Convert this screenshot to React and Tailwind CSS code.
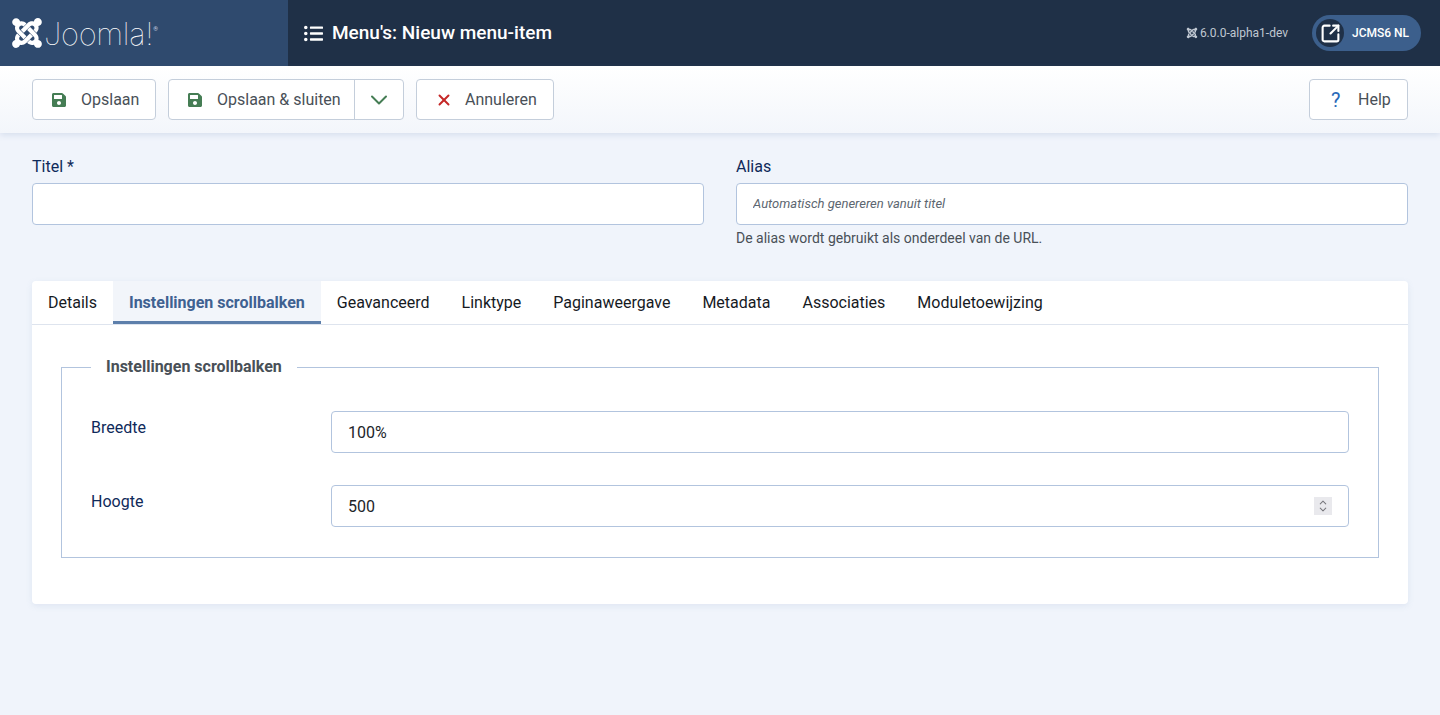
import { FaSave, FaListUl, FaJoomla } from "react-icons/fa";
import { ChevronDown, ChevronUp, SquareArrowOutUpRight, X } from "lucide-react";

const tabs = ["Details", "Instellingen scrollbalken", "Geavanceerd", "Linktype", "Paginaweergave", "Metadata", "Associaties", "Moduletoewijzing"];

function ToolButton({ icon, label, className = "" }) {
  return (
    <button className={`h-[41px] flex items-center bg-white border border-[#c4cedb] rounded-[4px] text-[16px] text-[#495057] ${className}`}>
      {icon}
      <span>{label}</span>
    </button>
  );
}

const inputClass = "w-full h-[42px] bg-white border border-[#b2c4de] rounded-[4px] px-4 text-[#212529] outline-none";

export default function App() {
  return (
    <div className="min-h-[715px] bg-[#f0f4fb] font-['Roboto',sans-serif]">
      {/* Header */}
      <div className="h-[66px] flex bg-[#1f3047] text-white">
        <div className="w-[288px] flex items-center pl-[10px] bg-[#2f4a6e]">
          <FaJoomla className="text-[34px] shrink-0" />
          <span className="font-['Inter',sans-serif] font-thin text-[31px] leading-none tracking-[-0.3px]">Joomla!</span>
          <span className="text-[6px] self-start mt-[24px] text-[#c8d2e0]">®</span>
        </div>
        <div className="flex-1 flex items-center pl-4 pr-[19px]">
          <FaListUl className="text-[19px] mr-[9px]" />
          <h1 className="text-[19px] font-medium">Menu's: Nieuw menu-item</h1>
          <div className="ml-auto flex items-center text-[12px] text-[#c0c8d2]">
            <FaJoomla className="text-[12px] mr-[2px]" />
            <span>6.0.0-alpha1-dev</span>
          </div>
          <div className="ml-6 h-[36px] w-[109px] flex items-center rounded-full bg-[#3c5f8c] pl-1">
            <span className="w-[28px] h-[28px] rounded-full bg-[#1f3047] flex items-center justify-center">
              <SquareArrowOutUpRight size={21} strokeWidth={2.4} />
            </span>
            <span className="ml-2 text-[12px] font-medium">JCMS6 NL</span>
          </div>
        </div>
      </div>

      {/* Toolbar */}
      <div className="h-[67px] flex items-center px-8 gap-3 bg-gradient-to-b from-white to-[#f3f6fb] shadow-[0_2px_6px_rgba(100,130,180,0.18)]">
        <ToolButton className="w-[124px] pl-[18px]" label="Opslaan" icon={<FaSave className="text-[16px] text-[#457d54] mr-[14px]" />} />
        <div className="h-[41px] w-[236px] flex bg-white border border-[#c4cedb] rounded-[4px] text-[16px] text-[#495057]">
          <button className="w-[186px] flex items-center pl-[18px] border-r border-[#c4cedb]">
            <FaSave className="text-[16px] text-[#457d54] mr-[14px]" />
            <span>Opslaan &amp; sluiten</span>
          </button>
          <button className="flex-1 flex items-center justify-center">
            <ChevronDown size={28} strokeWidth={1.7} className="text-[#457d54]" />
          </button>
        </div>
        <ToolButton className="w-[138px] pl-[18px]" label="Annuleren" icon={<X size={18} strokeWidth={2.6} className="text-[#c52827] mr-[12px]" />} />
        <ToolButton className="ml-auto w-[99px] pl-[21px]" label="Help" icon={<span className="w-[27px] text-left text-[20px] leading-none text-[#2a69b8]">?</span>} />
      </div>

      {/* Title + alias */}
      <div className="grid grid-cols-2 gap-8 px-8 pt-[21px]">
        <div>
          <label className="block h-[29px] pt-px text-[16px] leading-6 text-[#0f2a5a]">Titel *</label>
          <input className={`${inputClass} text-[16px]`} />
        </div>
        <div>
          <label className="block h-[29px] pt-px text-[16px] leading-6 text-[#0f2a5a]">Alias</label>
          <input className={`${inputClass} pb-[2px] text-[13px] italic placeholder:text-[#5c6670]`} placeholder="Automatisch genereren vanuit titel" />
          <p className="mt-[3px] text-[14px] leading-[20px] text-[#495057]">De alias wordt gebruikt als onderdeel van de URL.</p>
        </div>
      </div>

      {/* Tabs card */}
      <div className="mx-8 mt-[33px] h-[323px] bg-white rounded-[4px] shadow-[0_2px_6px_rgba(100,130,180,0.12)]">
        <div className="h-[44px] flex border-b border-[#dee4ee]">
          {tabs.map((t, i) => (
            <div
              key={t}
              className={`h-[43px] px-4 flex items-center text-[16px] ${i === 1 ? "bg-[#f2f5fa] border-b-[3px] border-[#5d7fab] pt-[3px] font-bold text-[#3f6191]" : "text-[#161a1f]"}`}
            >
              {t}
            </div>
          ))}
        </div>
        <fieldset className="mx-[29px] mt-[30px] h-[203px] border border-[#b2c4de] px-[29px] pt-[32px]">
          <legend className="px-[15px] text-[16px] leading-[24px] font-bold text-[#495057]">Instellingen scrollbalken</legend>
          <div className="flex mb-8">
            <label className="w-[240px] shrink-0 pt-[5px] text-[16px] leading-6 text-[#0f2a5a]">Breedte</label>
            <input className={`${inputClass} text-[16px]`} defaultValue="100%" />
          </div>
          <div className="flex">
            <label className="w-[240px] shrink-0 pt-[5px] text-[16px] leading-6 text-[#0f2a5a]">Hoogte</label>
            <div className="relative flex-1">
              <input className={`${inputClass} text-[16px]`} defaultValue="500" />
              <span className="absolute right-[17px] top-[12px] w-[18px] h-[18px] bg-[#e9e9ed] flex flex-col items-center justify-center text-[#77777c]">
                <ChevronUp size={14} strokeWidth={2.2} className="-mb-[3px]" />
                <ChevronDown size={14} strokeWidth={2.2} className="-mt-[1px]" />
              </span>
            </div>
          </div>
        </fieldset>
      </div>
    </div>
  );
}
